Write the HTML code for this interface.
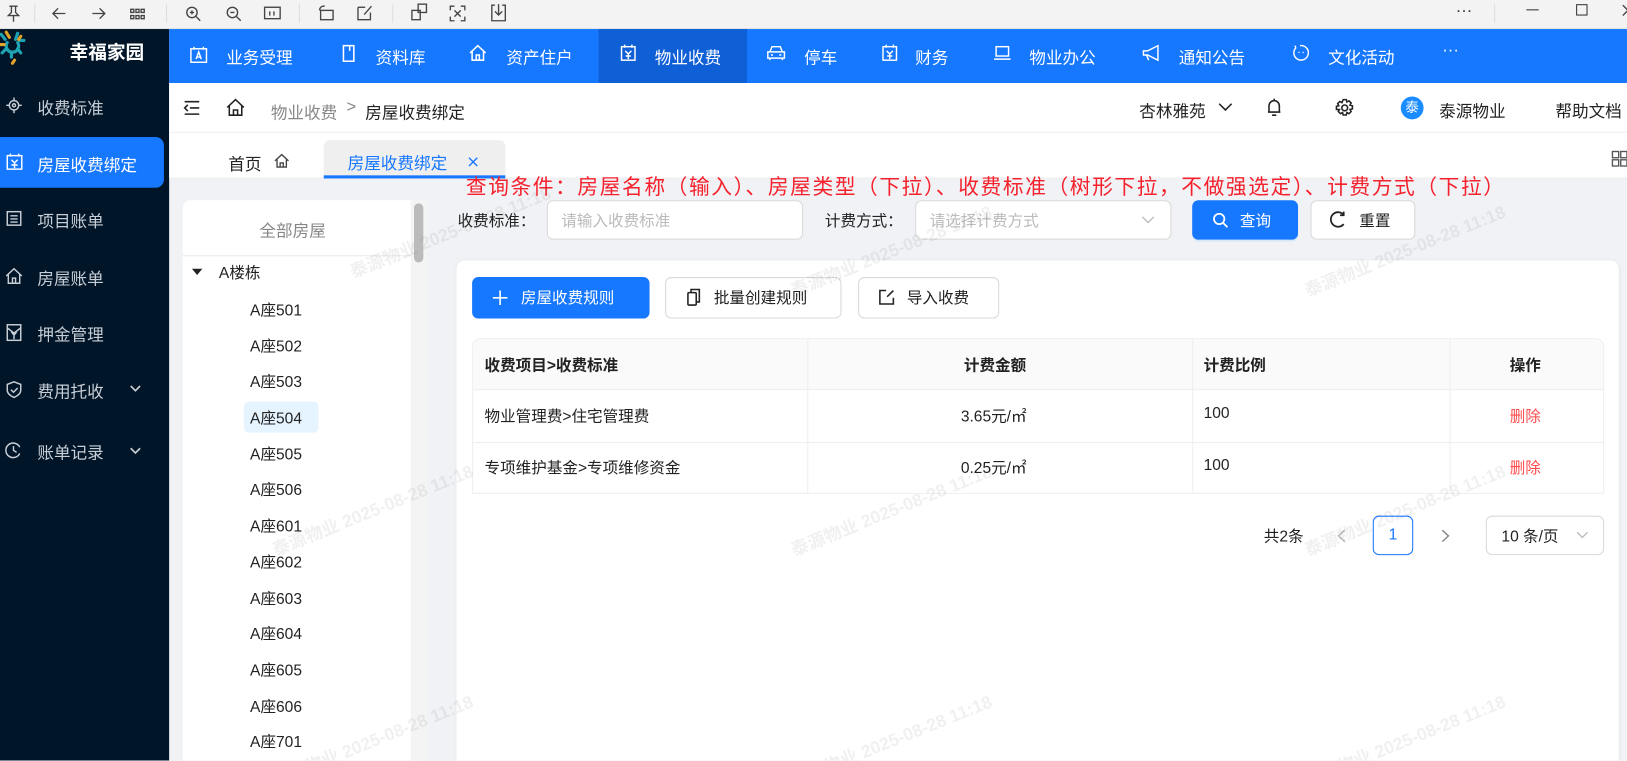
<!DOCTYPE html>
<html><head><meta charset="utf-8">
<style>
*{box-sizing:border-box;margin:0;padding:0}
html,body{width:1627px;height:760px;overflow:hidden;background:#f0f2f5}
body{font-family:"Liberation Sans","Noto Sans CJK SC",sans-serif;color:#222}
#w{position:absolute;left:0;top:0;width:1568px;height:733px;transform:scale(1.0376);transform-origin:0 0;overflow:hidden;background:#f0f2f5}
.a{position:absolute;white-space:nowrap}
svg{position:absolute;overflow:visible}
.tb svg{stroke:#444;fill:none;stroke-width:1.3}
.nav{color:#fff;font-size:16px}
.side{color:#c8ced6;font-size:16px}
.wm{position:absolute;color:rgba(0,0,0,.06);font-size:17px;font-weight:bold;transform:rotate(-22deg);white-space:nowrap}
.btn{position:absolute;border:1px solid #d9d9d9;border-radius:6px;background:#fff;font-size:15px}
.tree{font-size:15px;color:#222}
</style></head><body><div id="w">
<!-- toolbar -->
<div class="a tb" style="left:0;top:0;width:1568px;height:28px;background:#f3f3f3;border-bottom:1px solid #e2e2e2">
<svg style="left:6px;top:5px" width="14" height="16"><path d="M3 1h8M5 1v6l-3 3h10l-3-3V1M7 10v6"/></svg>
<div class="a" style="left:33px;top:4px;width:1px;height:18px;background:#ddd"></div>
<svg style="left:50px;top:7px" width="14" height="12"><path d="M13 6H1M6 1L1 6l5 5"/></svg>
<svg style="left:88px;top:7px" width="14" height="12"><path d="M1 6h12M8 1l5 5-5 5"/></svg>
<svg style="left:125px;top:8px" width="15" height="11"><path d="M1 1h3v3H1zM6 1h3v3H6zM11 1h3v3h-3zM1 7h3v3H1zM6 7h3v3H6zM11 7h3v3h-3z"/></svg>
<div class="a" style="left:160px;top:4px;width:1px;height:18px;background:#ddd"></div>
<svg style="left:178px;top:5px" width="16" height="16"><circle cx="7" cy="7" r="5"/><path d="M11 11l4 4M5 7h4M7 5v4"/></svg>
<svg style="left:217px;top:5px" width="16" height="16"><circle cx="7" cy="7" r="5"/><path d="M11 11l4 4M5 7h4"/></svg>
<svg style="left:254px;top:6px" width="16" height="13"><rect x="1" y="1" width="15" height="11"/><path d="M6 5v4M10 5v4"/></svg>
<div class="a" style="left:288px;top:4px;width:1px;height:18px;background:#ddd"></div>
<svg style="left:306px;top:4px" width="16" height="16"><rect x="3" y="6" width="12" height="9"/><path d="M2 6a4 4 0 0 1 5-4"/></svg>
<svg style="left:344px;top:4px" width="16" height="16"><path d="M1 3v12h12V8M7 10l7-8"/><path d="M1 3h7"/></svg>
<div class="a" style="left:378px;top:4px;width:1px;height:18px;background:#ddd"></div>
<svg style="left:396px;top:3px" width="16" height="18"><rect x="1" y="7" width="8" height="9"/><rect x="7" y="1" width="8" height="8"/></svg>
<svg style="left:433px;top:5px" width="16" height="16"><path d="M1 5V1h4M11 1h4v4M15 11v4h-4M5 15H1v-4M5 5l6 6M11 5l-6 6"/></svg>
<svg style="left:473px;top:3px" width="15" height="18"><path d="M4 2H1v15h13V2h-3M7.5 1v10M4 8l3.5 3.5L11 8"/></svg>
<div class="a" style="left:1403px;top:2px;font-size:16px;color:#333">···</div>
<div class="a" style="left:1440px;top:4px;width:1px;height:18px;background:#ddd"></div>
<div class="a" style="left:1471px;top:9px;width:12px;height:1px;background:#333"></div>
<div class="a" style="left:1519px;top:4px;width:11px;height:11px;border:1px solid #333"></div>
<svg style="left:1563px;top:4px" width="12" height="12"><path d="M1 1l10 10M11 1L1 11"/></svg>
</div>
<!-- sidebar -->
<div class="a" style="left:0;top:28px;width:163px;height:705px;background:#011528"></div>
<svg style="left:-2px;top:29px" width="30" height="36"><g stroke-width="3" fill="none" stroke-linecap="round"><path d="M9 12a6 6 0 1 0 10 0" stroke="#1ea5b5"/><path d="M3 4l4 5M19 3l-2 6M25 10h-4M4 22l4-4M22 22l-3-4M13 26v-5" stroke="#1ea5b5"/><path d="M8 2l3 5M22 6l-2 3M2 14h4M14 32l2-3" stroke="#e3a42a"/></g></svg>
<div class="a" style="left:67px;top:37px;font-size:18px;font-weight:bold;color:#fff">幸福家园</div>
<svg style="left:6px;top:94px" width="15" height="15" stroke="#c8ced6" fill="none" stroke-width="1.4"><circle cx="7.5" cy="7.5" r="4.5"/><circle cx="7.5" cy="7.5" r="1.5"/><path d="M7.5 0v3M7.5 12v3M0 7.5h3M12 7.5h3"/></svg>
<div class="a side" style="left:36px;top:91px">收费标准</div>
<div class="a" style="left:0;top:132px;width:158px;height:49px;background:#1677ff;border-radius:0 8px 8px 0"></div>
<svg style="left:6px;top:148px" width="16" height="16" stroke="#fff" fill="none" stroke-width="1.4"><rect x="1" y="2" width="14" height="13"/><path d="M4 0v3M12 0v3M5 6l3 3 3-3M8 9v5M5 11h6"/></svg>
<div class="a" style="left:36px;top:146px;color:#fff;font-size:16px">房屋收费绑定</div>
<svg style="left:6px;top:203px" width="16" height="16" stroke="#c8ced6" fill="none" stroke-width="1.4"><rect x="1" y="1" width="13" height="13"/><path d="M4 5h7M4 8h7M4 11h7"/></svg>
<div class="a side" style="left:36px;top:200px">项目账单</div>
<svg style="left:5px;top:258px" width="17" height="16" stroke="#c8ced6" fill="none" stroke-width="1.4"><path d="M1 8L8.5 1 16 8M3 6v9h11V6M7 15v-5h3v5"/></svg>
<div class="a side" style="left:36px;top:255px">房屋账单</div>
<svg style="left:6px;top:312px" width="16" height="17" stroke="#c8ced6" fill="none" stroke-width="1.4"><rect x="1" y="1" width="13" height="15"/><path d="M1 4l6.5 5L14 4M5 8l2.5 3L10 8M7.5 11v4"/></svg>
<div class="a side" style="left:36px;top:309px">押金管理</div>
<svg style="left:6px;top:367px" width="15" height="17" stroke="#c8ced6" fill="none" stroke-width="1.4"><path d="M7.5 1L14 3.5V9c0 3.5-3 5.5-6.5 7C4 14.5 1 12.5 1 9V3.5z"/><path d="M4.5 8.5l2.5 2.5 4-4"/></svg>
<div class="a side" style="left:36px;top:364px">费用托收</div>
<svg style="left:125px;top:371px" width="11" height="7" stroke="#c8ced6" fill="none" stroke-width="1.6"><path d="M1 1l4.5 4.5L10 1"/></svg>
<svg style="left:5px;top:426px" width="16" height="16" stroke="#c8ced6" fill="none" stroke-width="1.4"><path d="M14 5a7 7 0 1 0 0 6"/><path d="M8 4v4l3 2"/></svg>
<div class="a side" style="left:36px;top:423px">账单记录</div>
<svg style="left:125px;top:431px" width="11" height="7" stroke="#c8ced6" fill="none" stroke-width="1.6"><path d="M1 1l4.5 4.5L10 1"/></svg>
<!-- topnav -->
<div class="a" style="left:163px;top:28px;width:1405px;height:52px;background:#1677ff"></div>
<div class="a" style="left:577px;top:28px;width:143px;height:52px;background:#0f5fd6"></div>
<svg style="left:183px;top:45px" width="17" height="16" stroke="#fff" fill="none" stroke-width="1.4"><rect x="1" y="2" width="15" height="13"/><path d="M4 0v3M13 0v3M6 12l2.5-7 2.5 7M7 10h3"/></svg>
<div class="a nav" style="left:218px;top:42px">业务受理</div>
<svg style="left:330px;top:43px" width="12" height="17" stroke="#fff" fill="none" stroke-width="1.5"><rect x="1" y="1" width="10" height="15"/><path d="M7 1v5"/></svg>
<div class="a nav" style="left:362px;top:42px">资料库</div>
<svg style="left:452px;top:43px" width="17" height="16" stroke="#fff" fill="none" stroke-width="1.5"><path d="M1 8L8.5 1 16 8M3 6v9h11V6M7 15v-5h3v5"/></svg>
<div class="a nav" style="left:488px;top:42px">资产住户</div>
<svg style="left:598px;top:43px" width="15" height="16" stroke="#fff" fill="none" stroke-width="1.4"><rect x="1" y="2" width="13" height="13"/><path d="M4 0v3M11 0v3M4.5 6l3 3 3-3M7.5 9v5M5 11h5"/></svg>
<div class="a nav" style="left:631px;top:42px">物业收费</div>
<svg style="left:739px;top:44px" width="18" height="15" stroke="#fff" fill="none" stroke-width="1.4"><path d="M3 6l2-5h8l2 5M1 6h16v6H1zM3 12v2M15 12v2M4 9h2M12 9h2"/></svg>
<div class="a nav" style="left:775px;top:42px">停车</div>
<svg style="left:850px;top:43px" width="15" height="16" stroke="#fff" fill="none" stroke-width="1.4"><rect x="1" y="2" width="13" height="13"/><path d="M4 0v3M11 0v3M4.5 6l3 3 3-3M7.5 9v5M5 11h5"/></svg>
<div class="a nav" style="left:882px;top:42px">财务</div>
<svg style="left:957px;top:44px" width="18" height="15" stroke="#fff" fill="none" stroke-width="1.4"><rect x="3" y="1" width="12" height="9"/><path d="M1 13h16"/></svg>
<div class="a nav" style="left:992px;top:42px">物业办公</div>
<svg style="left:1101px;top:43px" width="17" height="16" stroke="#fff" fill="none" stroke-width="1.4"><path d="M1 6h4l10-5v14L5 10H1zM4 10l2 5"/></svg>
<div class="a nav" style="left:1136px;top:42px">通知公告</div>
<svg style="left:1246px;top:43px" width="16" height="16" stroke="#fff" fill="none" stroke-width="1.4"><path d="M3 3a7 7 0 1 0 4-2"/><path d="M3 3l-1-2M6 7v1M10 7v1"/></svg>
<div class="a nav" style="left:1280px;top:42px">文化活动</div>
<div class="a nav" style="left:1390px;top:40px">···</div>
<!-- header -->
<div class="a" style="left:163px;top:80px;width:1405px;height:48px;background:#fff;border-bottom:1px solid #eee"></div>
<svg style="left:177px;top:97px" width="16" height="14" stroke="#222" fill="none" stroke-width="1.5"><path d="M1 1h14M6 7h9M1 13h14M4 4L1 7l3 3"/></svg>
<svg style="left:218px;top:95px" width="18" height="17" stroke="#222" fill="none" stroke-width="1.5"><path d="M1 8.5L9 1l8 7.5M3 7v9h12V7M7 16v-5h4v5"/></svg>
<div class="a" style="left:261px;top:95px;font-size:16px;color:#888">物业收费</div>
<div class="a" style="left:334px;top:95px;font-size:16px;color:#888">&gt;</div>
<div class="a" style="left:352px;top:95px;font-size:16px;color:#222">房屋收费绑定</div>
<div class="a" style="left:1098px;top:94px;font-size:16px;color:#222">杏林雅苑</div>
<svg style="left:1174px;top:99px" width="14" height="9" stroke="#222" fill="none" stroke-width="1.5"><path d="M1 1l6 6 6-6"/></svg>
<svg style="left:1221px;top:94px" width="14" height="19" stroke="#222" fill="none" stroke-width="1.5"><path d="M2 14V8a5 5 0 0 1 10 0v6H1h12M7 1v2M5 17h4"/></svg>
<svg style="left:1287px;top:95px" width="18" height="18" stroke="#222" fill="none" stroke-width="1.5"><circle cx="9" cy="9" r="2.8"/><path d="M7.5 1h3l.6 2.3 2-1.1 2.1 2.1-1.1 2 2.3.6v3l-2.3.6 1.1 2-2.1 2.1-2-1.1-.6 2.3h-3l-.6-2.3-2 1.1-2.1-2.1 1.1-2L1 10.5v-3l2.3-.6-1.1-2 2.1-2.1 2 1.1z"/></svg>
<div class="a" style="left:1350px;top:93px;width:22px;height:22px;border-radius:50%;background:#1a8cff;color:#fff;font-size:13px;text-align:center;line-height:22px">泰</div>
<div class="a" style="left:1387px;top:94px;font-size:16px;color:#222">泰源物业</div>
<div class="a" style="left:1499px;top:94px;font-size:16px;color:#222">帮助文档</div>
<!-- tabs -->
<div class="a" style="left:163px;top:128px;width:1405px;height:44px;background:#fff;border-bottom:1px solid #eee"></div>
<div class="a" style="left:220px;top:145px;font-size:16px;color:#222">首页</div>
<svg style="left:264px;top:148px" width="15" height="14" stroke="#444" fill="none" stroke-width="1.3"><path d="M1 7L7.5 1 14 7M3 5.5V13h9V5.5M6 13V9h3v4"/></svg>
<div class="a" style="left:312px;top:135px;width:175px;height:37px;background:#efefef;border-radius:6px 6px 0 0"></div>
<div class="a" style="left:312px;top:169px;width:175px;height:3px;background:#1677ff"></div>
<div class="a" style="left:335px;top:144px;font-size:16px;color:#1677ff">房屋收费绑定</div>
<svg style="left:451px;top:151px" width="10" height="10" stroke="#1677ff" fill="none" stroke-width="1.3"><path d="M1 1l8 8M9 1L1 9"/></svg>
<svg style="left:1553px;top:145px" width="16" height="16" stroke="#555" fill="none" stroke-width="1.3"><rect x="1" y="1" width="6" height="6"/><rect x="9" y="1" width="6" height="6"/><rect x="1" y="9" width="6" height="6"/><rect x="9" y="9" width="6" height="6"/></svg>
<!-- annotation -->
<div class="a" style="left:449px;top:164px;font-size:20px;letter-spacing:1.5px;color:#f5222d;font-family:'Noto Sans CJK SC',sans-serif">查询条件：房屋名称（输入）、房屋类型（下拉）、收费标准（树形下拉，不做强选定）、计费方式（下拉）</div>
<!-- tree panel -->
<div class="a" style="left:176px;top:193px;width:220px;height:560px;background:#fff;border-radius:8px 0 0 0"></div>
<div class="a" style="left:176px;top:246px;width:220px;height:1px;background:#eaeaea"></div>
<div class="a" style="left:396px;top:193px;width:16px;height:560px;background:#f4f4f4"></div>
<div class="a" style="left:399px;top:196px;width:9px;height:57px;background:#bbb;border-radius:5px"></div>
<div class="a" style="left:250px;top:209px;font-size:16px;color:#888">全部房屋</div>
<svg style="left:185px;top:259px" width="10" height="7" fill="#222"><path d="M0 0h10L5 6z"/></svg>
<div class="a tree" style="left:211px;top:252px">A楼栋</div>
<div class="a" style="left:235px;top:387px;width:72px;height:30px;background:#e6f4ff;border-radius:5px"></div>
<div class="a tree" style="left:241px;top:288px">A座501</div>
<div class="a tree" style="left:241px;top:323px">A座502</div>
<div class="a tree" style="left:241px;top:357px">A座503</div>
<div class="a tree" style="left:241px;top:392px">A座504</div>
<div class="a tree" style="left:241px;top:427px">A座505</div>
<div class="a tree" style="left:241px;top:461px">A座506</div>
<div class="a tree" style="left:241px;top:496px">A座601</div>
<div class="a tree" style="left:241px;top:531px">A座602</div>
<div class="a tree" style="left:241px;top:566px">A座603</div>
<div class="a tree" style="left:241px;top:600px">A座604</div>
<div class="a tree" style="left:241px;top:635px">A座605</div>
<div class="a tree" style="left:241px;top:670px">A座606</div>
<div class="a tree" style="left:241px;top:704px">A座701</div>
<!-- search -->
<div class="a" style="left:441px;top:202px;font-size:15px;color:#222">收费标准：</div>
<div class="btn" style="left:527px;top:193px;width:247px;height:38px"></div>
<div class="a" style="left:541px;top:202px;font-size:15px;color:#bbb">请输入收费标准</div>
<div class="a" style="left:795px;top:202px;font-size:15px;color:#222">计费方式：</div>
<div class="btn" style="left:882px;top:193px;width:247px;height:38px"></div>
<div class="a" style="left:896px;top:202px;font-size:15px;color:#bbb">请选择计费方式</div>
<svg style="left:1100px;top:208px" width="13" height="8" stroke="#bbb" fill="none" stroke-width="1.3"><path d="M1 1l5.5 5.5L12 1"/></svg>
<div class="a" style="left:1149px;top:193px;width:102px;height:38px;background:#1677ff;border-radius:6px;box-shadow:0 2px 0 rgba(5,145,255,.1)"></div>
<svg style="left:1168px;top:204px" width="16" height="16" stroke="#fff" fill="none" stroke-width="1.7"><circle cx="7" cy="7" r="5"/><path d="M11 11l4 4"/></svg>
<div class="a" style="left:1195px;top:202px;font-size:15px;color:#fff">查询</div>
<div class="btn" style="left:1263px;top:193px;width:101px;height:38px"></div>
<svg style="left:1281px;top:203px" width="16" height="17" stroke="#222" fill="none" stroke-width="1.7"><path d="M14 4a7 7 0 1 0 0 9"/><path d="M14 1v3.5h-3.5"/></svg>
<div class="a" style="left:1310px;top:202px;font-size:15px;color:#222">重置</div>
<!-- card -->
<div class="a" style="left:440px;top:251px;width:1120px;height:500px;background:#fff;border-radius:8px;box-shadow:0 1px 4px rgba(0,0,0,.06)"></div>
<div class="a" style="left:455px;top:267px;width:171px;height:40px;background:#1677ff;border-radius:6px"></div>
<svg style="left:475px;top:280px" width="14" height="14" stroke="#fff" stroke-width="1.6"><path d="M7 0v14M0 7h14"/></svg>
<div class="a" style="left:502px;top:276px;font-size:15px;color:#fff">房屋收费规则</div>
<div class="btn" style="left:641px;top:267px;width:170px;height:40px"></div>
<svg style="left:662px;top:278px" width="14" height="17" stroke="#222" fill="none" stroke-width="1.5"><rect x="1" y="4" width="8" height="12" rx="1"/><path d="M4 4V1h8v12H9"/></svg>
<div class="a" style="left:688px;top:276px;font-size:15px;color:#222">批量创建规则</div>
<div class="btn" style="left:827px;top:267px;width:136px;height:40px"></div>
<svg style="left:847px;top:279px" width="15" height="15" stroke="#222" fill="none" stroke-width="1.5"><path d="M7 1H1v13h13V8M8 7l6-6"/></svg>
<div class="a" style="left:874px;top:276px;font-size:15px;color:#222">导入收费</div>
<!-- table -->
<div class="a" style="left:455px;top:326px;width:1091px;height:150px;border:1px solid #eee;border-radius:8px 8px 0 0;overflow:hidden">
 <div class="a" style="left:0;top:0;width:1091px;height:49px;background:#fafafa;border-bottom:1px solid #eee"></div>
 <div class="a" style="left:0;top:99px;width:1091px;height:1px;background:#eee"></div>
 <div class="a" style="left:322px;top:0;width:1px;height:150px;background:#eee"></div>
 <div class="a" style="left:693px;top:0;width:1px;height:150px;background:#eee"></div>
 <div class="a" style="left:941px;top:0;width:1px;height:150px;background:#eee"></div>
</div>
<div class="a" style="left:467px;top:341px;font-size:15px;font-weight:bold">收费项目&gt;收费标准</div>
<div class="a" style="left:929px;top:341px;font-size:15px;font-weight:bold">计费金额</div>
<div class="a" style="left:1160px;top:341px;font-size:15px;font-weight:bold">计费比例</div>
<div class="a" style="left:1455px;top:341px;font-size:15px;font-weight:bold">操作</div>
<div class="a" style="left:467px;top:390px;font-size:15px">物业管理费&gt;住宅管理费</div>
<div class="a" style="left:926px;top:390px;font-size:15px">3.65元/㎡</div>
<div class="a" style="left:1160px;top:390px;font-size:15px">100</div>
<div class="a" style="left:1455px;top:390px;font-size:15px;color:#ff4d4f">删除</div>
<div class="a" style="left:467px;top:440px;font-size:15px">专项维护基金&gt;专项维修资金</div>
<div class="a" style="left:926px;top:440px;font-size:15px">0.25元/㎡</div>
<div class="a" style="left:1160px;top:440px;font-size:15px">100</div>
<div class="a" style="left:1455px;top:440px;font-size:15px;color:#ff4d4f">删除</div>
<!-- pagination -->
<div class="a" style="left:1218px;top:506px;font-size:15px">共2条</div>
<svg style="left:1289px;top:510px" width="8" height="13" stroke="#bbb" fill="none" stroke-width="1.4"><path d="M7 1L1 6.5 7 12"/></svg>
<div class="a" style="left:1323px;top:497px;width:39px;height:38px;border:1px solid #1677ff;border-radius:6px;color:#1677ff;font-size:15px;text-align:center;line-height:36px">1</div>
<svg style="left:1389px;top:510px" width="8" height="13" stroke="#888" fill="none" stroke-width="1.4"><path d="M1 1l6 5.5L1 12"/></svg>
<div class="btn" style="left:1432px;top:497px;width:114px;height:38px"></div>
<div class="a" style="left:1447px;top:506px;font-size:15px">10 条/页</div>
<svg style="left:1519px;top:512px" width="12" height="8" stroke="#bbb" fill="none" stroke-width="1.3"><path d="M1 1l5 5 5-5"/></svg>
<!-- watermarks -->
<div class="wm" style="left:255px;top:478px">泰源物业 2025-08-28 11:18</div>
<div class="wm" style="left:330px;top:210px">泰源物业 2025-08-28 11:18</div>
<div class="wm" style="left:755px;top:228px">泰源物业 2025-08-28 11:18</div>
<div class="wm" style="left:1250px;top:228px">泰源物业 2025-08-28 11:18</div>
<div class="wm" style="left:1250px;top:478px">泰源物业 2025-08-28 11:18</div>
<div class="wm" style="left:755px;top:478px">泰源物业 2025-08-28 11:18</div>
<div class="wm" style="left:255px;top:700px">泰源物业 2025-08-28 11:18</div>
<div class="wm" style="left:755px;top:700px">泰源物业 2025-08-28 11:18</div>
<div class="wm" style="left:1250px;top:700px">泰源物业 2025-08-28 11:18</div>
</div></body></html>
